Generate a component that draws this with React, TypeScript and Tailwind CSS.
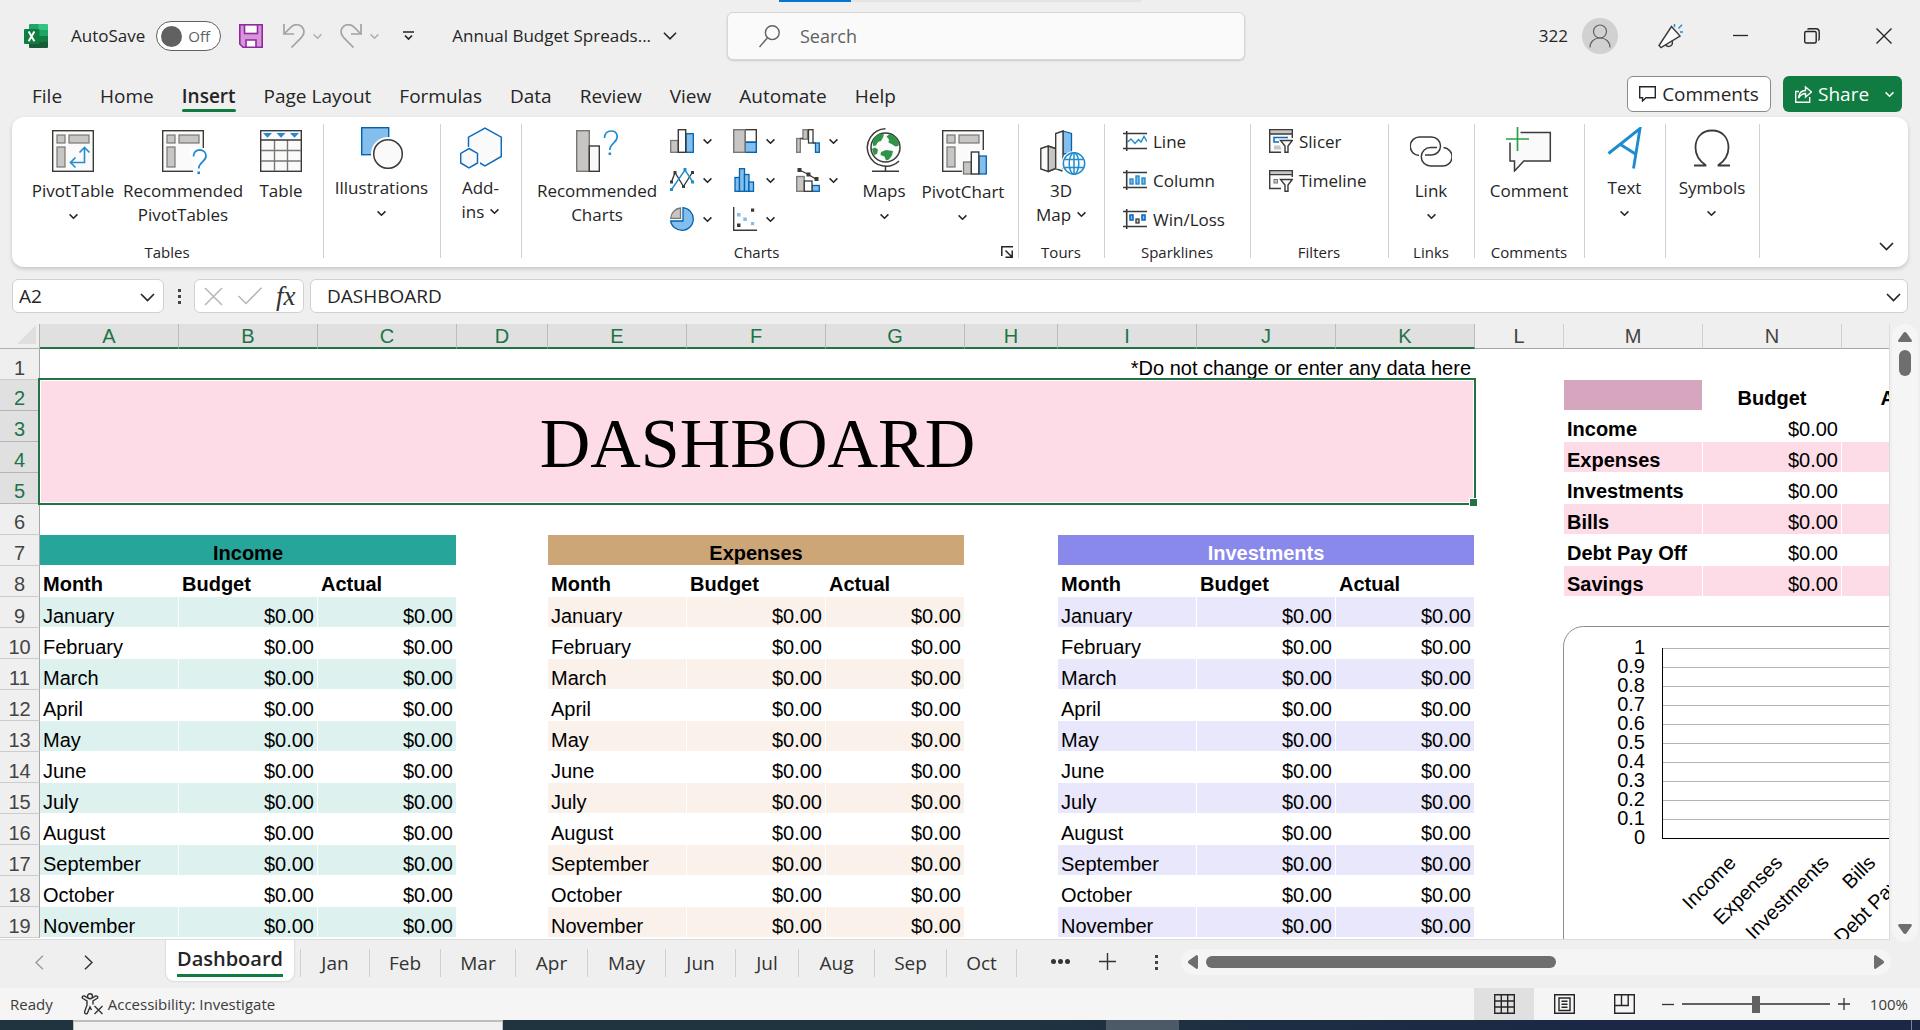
import type { ReactNode } from "react";

const ink = "#3b3a39";
const blue = "#1f8ccf";
const deep = "#0f6cbd";
const sky = "#83beec";
const grey = "#c8c6c4";
const mid = "#797774";
const paper = "#fafafa";

function Chevron({ size = 9, className = "" }: { size?: number; className?: string }) {
  return (
    <svg width={size} height={size} viewBox="0 0 9 9" fill="none" stroke="currentColor" strokeWidth={size > 10 ? 1 : 1.5} className={"inline-block shrink-0 " + className} aria-hidden="true">
      <path d="M0.6 2.4 4.5 6.3 8.4 2.4" />
    </svg>
  );
}

/* ---------- ribbon icons ---------- */

function PivotFrame() {
  return (
    <>
      <rect x="0.7" y="0.7" width="40.6" height="40.6" fill={paper} stroke={ink} strokeWidth="1.4" />
      <g fill={grey} stroke={mid} strokeWidth="1.2">
        <rect x="5" y="5" width="8" height="8" />
        <rect x="17" y="5" width="20" height="8" />
        <rect x="5" y="17" width="8" height="20" />
      </g>
    </>
  );
}

function PivotTableIcon() {
  return (
    <svg width="42" height="42" viewBox="0 0 42 42" fill="none">
      <PivotFrame />
      <path d="M32.5 18V32.5H19" stroke={blue} strokeWidth="1.6" />
      <path d="M27.5 22.5l5-5 5 5M23.5 27.500l-5 5 5 5" stroke={blue} strokeWidth="1.6" />
    </svg>
  );
}

function RecommendedPivotIcon() {
  return (
    <svg width="46" height="46" viewBox="0 0 46 46" fill="none" className="-mb-1 ml-1">
      <PivotFrame />
      <path d="M27 18h19v28H31v-6h2z" fill="#fff" />
      <path d="M31.500 26.500c0-4 2.600-6.500 6.200-6.500s6.300 2.400 6.300 6c0 5.500-7.300 6.300-7.300 12.500" stroke={blue} strokeWidth="1.8" />
      <rect x="35.400" y="41.500" width="2.600" height="2.600" fill={blue} />
    </svg>
  );
}

function TableIcon() {
  return (
    <svg width="42" height="42" viewBox="0 0 42 42" fill="none">
      <rect x="0.7" y="0.7" width="40.6" height="40.6" fill={paper} stroke={ink} strokeWidth="1.4" />
      <path d="M14.500 10v31M27.500 10v31M1 20.500h40M1 31h40" stroke={mid} strokeWidth="1.4" />
      <path d="M0 10h42" stroke={ink} strokeWidth="1.600" />
      <path d="M3 3h9L7.500 7.800zM16.500 3h9L21 7.800zM30 3h9l-4.500 4.800z" fill={blue} />
    </svg>
  );
}

function IllustrationsIcon() {
  return (
    <svg width="42" height="42" viewBox="0 0 42 42" fill="none">
      <rect x="0.7" y="0.7" width="27" height="27" fill={sky} stroke="#0063b1" strokeWidth="1.400" />
      <circle cx="27" cy="27" r="17" fill="#fff" />
      <circle cx="27" cy="27" r="14.300" fill={paper} stroke={ink} strokeWidth="1.500" />
    </svg>
  );
}

function AddInsIcon() {
  return (
    <svg width="42" height="42" viewBox="0 0 42 42" fill="none">
      <path d="M8.500 20V10.200L25 1l16.300 9.200v19.300L25 38.800l-6-3.300" fill={paper} stroke={deep} strokeWidth="1.500" />
      <path d="M9 18l11 6v13l-2 3z" fill="#fff" />
      <path d="M9 21.500l8.500 4.900v9.600L9 41l-8.300-5v-9.600z" fill={paper} stroke={deep} strokeWidth="1.500" />
    </svg>
  );
}

function RecommendedChartsIcon() {
  return (
    <svg width="42" height="42" viewBox="0 0 42 42" fill="none">
      <rect x="0.7" y="0.7" width="12.600" height="40.6" fill={grey} stroke={mid} strokeWidth="1.400" />
      <rect x="13.300" y="16" width="10" height="25.300" fill={paper} stroke={ink} strokeWidth="1.400" />
      <path d="M28.500 8c0-4.600 2.800-7 6.500-7s6.200 2.300 6.200 6c0 5.600-7.400 6.300-7.400 13" stroke={blue} strokeWidth="1.700" />
      <rect x="32.600" y="22.500" width="2.500" height="2.500" fill={blue} />
    </svg>
  );
}

function ColumnChartIcon() {
  return (
    <svg width="24" height="24" viewBox="0 0 24 24">
      <rect x="0.7" y="11.500" width="7.500" height="11.800" fill={grey} stroke={mid} strokeWidth="1.300" />
      <rect x="16" y="4.700" width="7.300" height="18.600" fill={sky} stroke="#0063b1" strokeWidth="1.300" />
      <rect x="8.300" y="0.7" width="7.400" height="22.600" fill="#fff" stroke={ink} strokeWidth="1.400" />
    </svg>
  );
}
function TreemapIcon() {
  return (
    <svg width="24" height="24" viewBox="0 0 24 24">
      <rect x="12" y="0.7" width="11.300" height="12.500" fill="#fff" stroke={ink} strokeWidth="1.400" />
      <rect x="12" y="13.300" width="11.300" height="10" fill={sky} stroke="#0063b1" strokeWidth="1.400" />
      <rect x="0.7" y="0.7" width="11.300" height="22.600" fill={grey} stroke={mid} strokeWidth="1.400" />
    </svg>
  );
}
function WaterfallIcon() {
  return (
    <svg width="24" height="24" viewBox="0 0 24 24" strokeWidth="1.300">
      <rect x="0.7" y="9.500" width="3.600" height="13.800" fill={grey} stroke={mid} />
      <rect x="7" y="0.7" width="4.500" height="9.500" fill={grey} stroke={mid} />
      <path d="M4.300 9.500H7M17 14h3" stroke={ink} />
      <rect x="12.500" y="0.7" width="4.500" height="13.300" fill="#fff" stroke={ink} />
      <rect x="19.500" y="14" width="3.800" height="9.300" fill={sky} stroke="#0063b1" />
    </svg>
  );
}
function LineChartIcon() {
  return (
    <svg width="24" height="24" viewBox="0 0 24 24" fill="none">
      <path d="M1.500 14 5 4.500 13.500 18.500 22.500 4" stroke={ink} strokeWidth="1.400" />
      <path d="M1.500 21.500 15 2 22.500 13.500" stroke={blue} strokeWidth="1.400" />
      <path d="M0 12.500h3v3H0zM3.500 3h3v3h-3zM12 17h3v3h-3zM21 3h3v3h-3z" fill={ink} />
      <path d="M0 20h3v3H0zM13.500 0h3v3h-3zM21 12.500h3v3h-3z" fill={blue} />
    </svg>
  );
}
function HistogramIcon() {
  return (
    <svg width="24" height="24" viewBox="0 0 24 24" fill={sky} stroke="#0063b1" strokeWidth="1.300">
      <rect x="2" y="9.500" width="4.500" height="13.800" />
      <rect x="6.500" y="0.7" width="5" height="22.600" />
      <rect x="11.500" y="6.500" width="4.500" height="16.800" />
      <rect x="16" y="14" width="4.500" height="9.300" />
    </svg>
  );
}
function ComboIcon() {
  return (
    <svg width="24" height="24" viewBox="0 0 24 24" fill="none" strokeWidth="1.300">
      <rect x="0.7" y="8.500" width="7.500" height="14.800" fill={grey} stroke={mid} />
      <rect x="16" y="17.500" width="7.300" height="5.800" fill={sky} stroke="#0063b1" />
      <rect x="8.300" y="13" width="7.700" height="10.300" fill="#fff" stroke={ink} />
      <path d="M3.500 2 12.500 6.500 20.500 11.500" stroke={ink} />
      <path d="M1.500 0h4v4h-4zM10.500 4.500h4v4h-4zM18.500 9h4v4h-4z" fill={ink} />
    </svg>
  );
}
function PieIcon() {
  return (
    <svg width="24" height="24" viewBox="0 0 24 24" strokeWidth="1.300">
      <path d="M13 .7V14H.7A11.300 10 0 0 0 12 23.300A11.300 11.300 0 0 0 23.300 12A11.300 11.300 0 0 0 13 .7z" fill={sky} stroke="#0063b1" />
      <path d="M10.500 1v10.300H.7A11 11 0 0 1 10.500 1z" fill={grey} stroke={mid} />
    </svg>
  );
}
function ScatterIcon() {
  return (
    <svg width="24" height="24" viewBox="0 0 24 24">
      <path d="M0.7 0v23.300H24" fill="none" stroke={ink} strokeWidth="1.400" />
      <path d="M4 6h3.500v3.500H4zM10.300 10.500h3.500V14h-3.500zM18 15h3.200v3.200H18z" fill={sky} />
      <path d="M4 16.500h3.500V20H4zM18 1.500h3.200v3.200H18z" fill={ink} />
    </svg>
  );
}

function MapsIcon() {
  return (
    <svg width="36" height="44" viewBox="0 0 36 44" fill="none">
      <circle cx="19.500" cy="19.500" r="14.500" fill={paper} stroke={ink} strokeWidth="1.500" />
      <path d="M20.500 8.500l3-2.500 6 3 3.500 6-.500 3-3 .5-4-2.500-3-1.500.5-3zM9 9l5-3.500 4 1-1 3-2 3.500-3 1-2 3.500-3 .5c-.5-4 .5-7 2-9zM15 24l5-2 7 1-1 4.500-3 4-3 1-1.500-4-4-1.500zM6 21l3-1.500 3 2-1 4.500-3 1z" fill="#2e9447" />
      <path d="M19.500 .8A18.700 18.700 0 1 0 33 33" stroke={ink} strokeWidth="1.500" />
      <path d="M19.500 38v5M6 43.200h27" stroke={ink} strokeWidth="1.500" />
    </svg>
  );
}

function PivotChartIcon() {
  return (
    <svg width="46" height="46" viewBox="0 0 46 46" fill="none" className="ml-1">
      <PivotFrame />
      <path d="M26 20h20v26H20V30h6z" fill="#fff" />
      <rect x="21.500" y="32" width="8" height="12" fill={grey} stroke={mid} strokeWidth="1.300" />
      <rect x="37" y="26" width="7.300" height="18" fill={sky} stroke="#0063b1" strokeWidth="1.300" />
      <rect x="29.300" y="22" width="7.500" height="22" fill="#fff" stroke={ink} strokeWidth="1.400" />
    </svg>
  );
}

function Map3DIcon() {
  return (
    <svg width="46" height="46" viewBox="0 0 46 46" fill="none" className="-mb-1 ml-1">
      <path d="M8.200 41.500V16l7.300 2.500v20z" fill={grey} stroke={mid} strokeWidth="1.200" />
      <path d="M.8 18.500 8.200 16V41.500L.8 39z" fill={paper} stroke={ink} strokeWidth="1.400" />
      <path d="M8.200 16l7.300 2.500M8.200 41.500l7.300-3 7 2.500" stroke={ink} strokeWidth="1.400" />
      <path d="M23 1l8.500 2.500V24H23z" fill={sky} stroke="#0063b1" strokeWidth="1.300" />
      <path d="M15.700 38.500V3.500L23 1v38" fill={paper} stroke={ink} strokeWidth="1.400" />
      <circle cx="34" cy="33.500" r="12.500" fill="#fff" />
      <g stroke={blue} strokeWidth="1.500">
        <circle cx="34" cy="33.500" r="10.700" fill={paper} />
        <ellipse cx="34" cy="33.500" rx="4.800" ry="10.700" />
        <path d="M24.500 29.500h19M24.500 37.500h19M34 23v21" />
      </g>
    </svg>
  );
}

function SparkFrame({ children }: { children: ReactNode }) {
  return (
    <svg width="24" height="22" viewBox="0 0 24 22" fill="none">
      {children}
      <path d="M0 3.500h24M0 18.500h24" stroke={ink} strokeWidth="1.600" />
      <path d="M3.700 1v20" stroke={ink} strokeWidth="1.600" />
    </svg>
  );
}
function SparkLineIcon() {
  return <SparkFrame><path d="M4.500 12l3.500-3 4 4.500 3.500-4 2.500 2.500 3-5.500 3 5" stroke={blue} strokeWidth="1.400" /></SparkFrame>;
}
function SparkColumnIcon() {
  return (
    <SparkFrame>
      <g fill={sky} stroke={blue} strokeWidth="1.400">
        <rect x="7" y="10" width="3" height="5" /><rect x="13" y="7" width="3" height="8" /><rect x="19" y="9" width="3" height="6" />
      </g>
    </SparkFrame>
  );
}
function SparkWinLossIcon() {
  return (
    <SparkFrame>
      <g fill={sky} stroke={deep} strokeWidth="1.600">
        <rect x="7" y="7" width="3" height="5" /><rect x="19" y="7" width="3" height="5" />
      </g>
      <rect x="13" y="11" width="3" height="4" fill={grey} stroke={ink} strokeWidth="1.300" />
    </SparkFrame>
  );
}
function Funnel() {
  return <path d="M11.500 11.500H23.300l-4.300 5.500v6.300h-3V17z" fill={paper} stroke={ink} strokeWidth="1.400" />;
}
function SlicerIcon() {
  return (
    <svg width="24" height="24" viewBox="0 0 24 24" fill="none">
      <rect x="0.700" y="0.7" width="22.600" height="22.600" fill={paper} />
      <path d="M12 23.300H.7V.7h22.600V9" stroke={ink} strokeWidth="1.400" />
      <path d="M.7 .7h22.600v4.300H.7z" fill={grey} stroke={ink} strokeWidth="1.300" />
      <path d="M10 13H5V8.500h14" stroke={deep} strokeWidth="1.500" />
      <path d="M5 16.500h6l1.500 4H5z" fill={grey} />
      <path d="M9.500 10H24v14H14v-6z" fill="#fff" />
      <Funnel />
    </svg>
  );
}
function TimelineIcon() {
  return (
    <svg width="24" height="24" viewBox="0 0 24 24" fill="none">
      <path d="M12 20.500H.7V2.700h22.600V9" fill={paper} stroke={ink} strokeWidth="1.400" />
      <path d="M.7 2.700h22.600v4H.7z" fill={grey} stroke={ink} strokeWidth="1.300" />
      <rect x="5" y="11.500" width="3.500" height="3.500" fill={grey} stroke={mid} />
      <path d="M9.500 10H24v14H14v-6z" fill="#fff" />
      <Funnel />
    </svg>
  );
}

function LinkIcon() {
  return (
    <svg width="42" height="42" viewBox="0 0 42 42" fill="none" stroke={ink} strokeWidth="1.500">
      <path d="M9 25.500A9.200 9.200 0 0 1 10 7h11.500a9 9 0 0 1 0 18H15" />
      <path d="M33.500 17.500A9 9 0 0 1 32 36H20.500a9.200 9.200 0 0 1 0-18.500H27" />
    </svg>
  );
}
function CommentIcon() {
  return (
    <svg width="46" height="45" viewBox="0 0 46 45" fill="none" className="-mt-[3px]">
      <path d="M4 16V34h5v10l9.500-10H45V5.500H15V16z" fill={paper} />
      <path d="M4 15.500V34h4.500v10l9.300-10h26.500V5.500H14.500" stroke={ink} strokeWidth="1.500" />
      <path d="M11.500 0v24M0 12h23" stroke="#2aa148" strokeWidth="1.700" />
    </svg>
  );
}
function TextIcon() {
  return (
    <svg width="36" height="42" viewBox="0 0 36 42" fill="none" stroke={blue} strokeWidth="2.900">
      <path d="M1.500 26.500 33 1.500 26.500 41.500M13.500 17.500 28.500 27" />
    </svg>
  );
}
function OmegaIcon() {
  return (
    <svg width="36" height="42" viewBox="0 0 36 42" fill="none" stroke={ink} strokeWidth="1.800">
      <path d="M0 38.500h11.500v-.500C5.500 34 1.500 29 1.500 20.500 1.500 10.500 8 3.500 18 3.500s16.500 7 16.500 17c0 8.500-4 13.500-10 17.500v.5H36" />
    </svg>
  );
}

/* ---------- ribbon building blocks ---------- */

function BigButton({ icon, lines, arrow = "none", className }: { icon: ReactNode; lines: string[]; arrow?: "none" | "below" | "inline"; className: string }) {
  return (
    <button type="button" className={"flex flex-col items-center gap-[7px] text-center " + className}>
      {icon}
      <span className="text-[17px] leading-6 whitespace-nowrap">
        {lines.map((l, i) => (
          <span key={l} className="block">
            {l}
            {arrow === "inline" && i === lines.length - 1 && <Chevron className="ml-1.5 mb-1" />}
          </span>
        ))}
        {arrow === "below" && <Chevron className="mx-auto mt-px block" />}
      </span>
    </button>
  );
}

function Group({ label, className, children, pad = "pt-[13px]" }: { label?: string; className: string; children: ReactNode; pad?: string }) {
  return (
    <section aria-label={label} className={"relative flex shrink-0 flex-col " + className}>
      <div className={"flex flex-1 items-start pr-0.5 " + pad}>{children}</div>
      {label && <div className={"pb-[5px] text-center text-[15px] leading-5 " + (label === "Charts" ? "pr-7" : "pr-0.5")}>{label}</div>}
      <div className="absolute top-[7px] right-0 h-[134px] w-px bg-[#d1d1d1]" />
    </section>
  );
}

function SmallButton({ icon, label }: { icon: ReactNode; label: string }) {
  return (
    <button type="button" className="flex h-6 items-center gap-1.5 text-[17px] leading-6">
      <span className="flex w-6 justify-center">{icon}</span>
      <span className="pt-0.5">{label}</span>
    </button>
  );
}

const chartButtons: [string, ReactNode][] = [
  ["Column or bar chart", <ColumnChartIcon />],
  ["Hierarchy chart", <TreemapIcon />],
  ["Waterfall chart", <WaterfallIcon />],
  ["Line or area chart", <LineChartIcon />],
  ["Statistic chart", <HistogramIcon />],
  ["Combo chart", <ComboIcon />],
  ["Pie or doughnut chart", <PieIcon />],
  ["Scatter chart", <ScatterIcon />],
];

function Ribbon() {
  return (
    <div className="mx-3 flex h-[150px] shrink-0 overflow-hidden rounded-xl bg-white shadow-[0_2px_4px_rgba(0,0,0,0.18)]">
      <Group label="Tables" className="w-[312px]">
        <BigButton icon={<PivotTableIcon />} lines={["PivotTable"]} arrow="below" className="ml-[15px] w-[92px]" />
        <BigButton icon={<RecommendedPivotIcon />} lines={["Recommended", "PivotTables"]} className="w-32" />
        <BigButton icon={<TableIcon />} lines={["Table"]} className="w-[68px]" />
      </Group>
      <Group className="w-[117px]" pad="pt-2.5">
        <BigButton icon={<IllustrationsIcon />} lines={["Illustrations"]} arrow="below" className="w-full" />
      </Group>
      <Group className="w-[81px]" pad="pt-2.5">
        <BigButton icon={<AddInsIcon />} lines={["Add-", "ins"]} arrow="inline" className="w-full" />
      </Group>
      <Group label="Charts" className="w-[497px]">
        <BigButton icon={<RecommendedChartsIcon />} lines={["Recommended", "Charts"]} className="ml-[11px] w-32" />
        <div className="-mt-px ml-[9px] grid grid-cols-3 gap-x-4 gap-y-[15px]">
          {chartButtons.map(([name, icon]) => (
            <button key={name} type="button" aria-label={name} className="flex w-[47px] items-center gap-[9px]">
              {icon}
              <Chevron />
            </button>
          ))}
        </div>
        <BigButton icon={<span className="-mt-0.5 block"><MapsIcon /></span>} lines={["Maps"]} arrow="below" className="ml-[11px] w-[60px]" />
        <BigButton icon={<span className="-mb-[3px] block"><PivotChartIcon /></span>} lines={["PivotChart"]} arrow="below" className="ml-[3px] w-[92px]" />
        <button type="button" aria-label="Chart settings" className="absolute right-1.5 bottom-[9px]">
          <svg width="12" height="12" viewBox="0 0 12 12" fill="none" stroke="#252525" strokeWidth="1.500">
            <path d="M.8 10V.8H12M4.500 4.500l6 6M11.200 4.500v6.700H4.500" />
          </svg>
        </button>
      </Group>
      <Group label="Tours" className="w-[86px]">
        <BigButton icon={<Map3DIcon />} lines={["3D", "Map"]} arrow="inline" className="w-full" />
      </Group>
      <Group label="Sparklines" className="w-[146px]" pad="pt-3">
        <div className="ml-[18px] flex flex-col gap-[15px]">
          <SmallButton icon={<SparkLineIcon />} label="Line" />
          <SmallButton icon={<SparkColumnIcon />} label="Column" />
          <SmallButton icon={<SparkWinLossIcon />} label="Win/Loss" />
        </div>
      </Group>
      <Group label="Filters" className="w-[138px]" pad="pt-3">
        <div className="ml-[18px] flex flex-col gap-[15px]">
          <SmallButton icon={<SlicerIcon />} label="Slicer" />
          <SmallButton icon={<TimelineIcon />} label="Timeline" />
        </div>
      </Group>
      <Group label="Links" className="w-[86px]">
        <BigButton icon={<LinkIcon />} lines={["Link"]} arrow="below" className="w-full" />
      </Group>
      <Group label="Comments" className="w-[110px]">
        <BigButton icon={<CommentIcon />} lines={["Comment"]} className="w-full" />
      </Group>
      <Group className="w-[81px]" pad="pt-2.5">
        <BigButton icon={<TextIcon />} lines={["Text"]} arrow="below" className="w-full" />
      </Group>
      <Group className="w-[94px]" pad="pt-2.5">
        <BigButton icon={<OmegaIcon />} lines={["Symbols"]} arrow="below" className="w-full" />
      </Group>
      <button type="button" aria-label="Collapse ribbon" className="mr-3.5 mb-2.5 ml-auto self-end">
        <Chevron size={15} />
      </button>
    </div>
  );
}

/* ---------- title bar ---------- */

function ExcelLogo() {
  return (
    <svg width="24" height="24" viewBox="0 0 24 24" aria-label="Excel" role="img">
      <path d="M6 0h9v6H5V1q0-1 1-1z" fill="#21a366" />
      <path d="M14.500 0H23q1 0 1 1v5h-9.500z" fill="#33c481" />
      <path d="M5 6h9.500v6H5z" fill="#107c41" />
      <path d="M14.500 6H24v6h-9.500z" fill="#21a366" />
      <path d="M5 12h9.500v6H5z" fill="#185c37" />
      <path d="M14.500 12H24v6h-9.500z" fill="#107c41" />
      <path d="M5 18h19v5q0 1-1 1H6q-1 0-1-1z" fill="#185c37" />
      <rect x="0" y="5" width="15.500" height="15" rx="1" fill="#107c41" />
      <path d="M4.600 7.500 10.400 17.200M10.400 7.500 4.600 17.200" stroke="#fff" strokeWidth="2" />
    </svg>
  );
}

function SaveIcon() {
  return (
    <svg width="24" height="24" viewBox="0 0 24 24" stroke="#8e2a9c" strokeWidth="1.600">
      <path d="M.8 .8h22.400v22.400H4L.8 20z" fill="#d795dd" />
      <rect x="5.500" y=".8" width="13" height="8.700" fill="#fafafa" />
      <path d="M7 23.200V16h10v7.200z" fill="#fafafa" />
    </svg>
  );
}

function UndoIcon({ flip = false }: { flip?: boolean }) {
  return (
    <svg width="22" height="24" viewBox="0 0 22 24" fill="none" stroke="#a3a3a3" strokeWidth="1.700" className={flip ? "-scale-x-100" : ""}>
      <path d="M1 0v10h10" />
      <path d="M1 10 8.500 2.700C12-.5 17 .3 19.500 3.500c2.300 3.200 1.500 7-1 9.800L8.500 23.500" />
    </svg>
  );
}

function TitleBar() {
  return (
    <header className="relative flex h-[72px] shrink-0 items-center pb-3 pl-6">
      <div className="absolute top-0 left-[779px] flex h-0.5 w-[362px] bg-[#e4e4e4]"><div className="w-[72px] bg-[#0078d4]" /></div>
      <div className="flex w-[703px] shrink-0 items-center pt-3">
        <ExcelLogo />
        <label className="ml-[23px] flex items-center gap-[11px] text-[17px] leading-6">
          AutoSave
          <input type="checkbox" role="switch" className="peer sr-only" />
          <span className="flex h-[30px] w-[65px] items-center gap-1.5 rounded-full border border-[#616161] bg-white pl-1 text-[15px] text-[#616161]">
            <span className="size-[21px] rounded-full bg-[#616161]" />
            Off
          </span>
        </label>
        <button type="button" aria-label="Save" className="ml-[18px]"><SaveIcon /></button>
        <button type="button" aria-label="Undo" className="ml-5"><UndoIcon /></button>
        <Chevron className="ml-2 text-[#b0b0b0]" />
        <button type="button" aria-label="Redo" className="ml-[18px]"><UndoIcon flip /></button>
        <Chevron className="ml-2 text-[#b0b0b0]" />
        <button type="button" aria-label="Customize Quick Access Toolbar" className="ml-6">
          <svg width="11" height="10" viewBox="0 0 11 10" fill="none" stroke="#252525" strokeWidth="1.700"><path d="M0 1h11M2 4.500 5.500 8 9 4.500" /></svg>
        </button>
        <button type="button" className="ml-[38px] flex items-center gap-3 text-[17px] leading-6 whitespace-nowrap">
          Annual Budget Spreads... <Chevron size={14} />
        </button>
      </div>
      <div className="mt-3 flex h-12 w-[518px] shrink-0 items-center gap-5 rounded-md border border-[#d6d6d6] bg-[#fafafa] pl-[31px] shadow-[0_1px_2px_rgba(0,0,0,0.15)]">
        <svg width="21" height="23" viewBox="0 0 21 23" fill="none" stroke="#616161" strokeWidth="1.400" className="shrink-0"><circle cx="13.300" cy="7.700" r="6.900" /><path d="M8.500 12.700.5 22" /></svg>
        <input type="text" aria-label="Search" placeholder="Search" className="w-full bg-transparent text-[18px] placeholder:text-[#616161] focus:outline-none" />
      </div>
      <div className="flex flex-1 items-center justify-end pt-3 pr-7">
        <span className="text-[17px]">322</span>
        <button type="button" aria-label="Account" className="ml-3.5 flex size-9 items-center justify-center rounded-full bg-[#d1d1d1]">
          <svg width="22" height="24" viewBox="0 0 22 24" fill="none" stroke="#616161" strokeWidth="1.200"><circle cx="11" cy="7.500" r="6.500" /><path d="M1 23.500c0-6 4.500-9.500 10-9.500s10 3.500 10 9.500" /></svg>
        </button>
        <button type="button" aria-label="Coming soon" className="ml-10">
          <svg width="25" height="25" viewBox="0 0 25 25" fill="none" stroke={ink} strokeWidth="1.400">
            <path d="M13.500 2.500 22 12 3 23.500 1 21.500z" fill={paper} />
            <path d="M7.500 20.500c1 3 6.500 2.500 7-1.500l-.5-2.500" />
            <path d="M16.500 0v3M20.500 4.500 24 .8M22 8h3" stroke={blue} />
          </svg>
        </button>
        <button type="button" aria-label="Minimize" className="ml-[50px]">
          <svg width="15" height="16" viewBox="0 0 15 16" stroke="#252525" strokeWidth="1.300"><path d="M0 7.500h15" /></svg>
        </button>
        <button type="button" aria-label="Restore" className="ml-14">
          <svg width="16" height="16" viewBox="0 0 16 16" fill="none" stroke="#252525" strokeWidth="1.400"><rect x=".7" y="3.500" width="11.500" height="11.500" rx="1.500" /><path d="M3.500 1.500Q4 .7 5.500.7H12q3.200 0 3.200 3.200v6q0 2-1 2.600" /></svg>
        </button>
        <button type="button" aria-label="Close" className="ml-14">
          <svg width="16" height="16" viewBox="0 0 16 16" stroke="#252525" strokeWidth="1.400"><path d="M.5.5l15 15M15.500.5l-15 15" /></svg>
        </button>
      </div>
    </header>
  );
}

const menu = ["File", "Home", "Insert", "Page Layout", "Formulas", "Data", "Review", "View", "Automate", "Help"];

function MenuRow() {
  return (
    <div className="flex h-[45px] shrink-0 items-start justify-between pr-[18px] pl-8">
      <nav className="flex items-center gap-7 pt-2.5 text-[19px] leading-7">
        {menu.map((m) => (
          <a key={m} href="#" className={m === "Insert" ? "relative font-semibold" : m === "File" ? "mr-2.5" : ""}>
            {m}
            {m === "Insert" && <span className="absolute inset-x-0 -bottom-0.5 h-[3px] rounded-full bg-[#0f7b41]" />}
          </a>
        ))}
      </nav>
      <div className="flex gap-3 pt-1">
        <button type="button" className="flex h-9 w-36 items-center justify-center gap-1.5 rounded-md border border-[#8a8a8a] bg-white text-[19px]">
          <svg width="17" height="16" viewBox="0 0 17 16" fill="none" stroke="#252525" strokeWidth="1.400"><path d="M.7.7h15.600v11H7L3.500 15v-3.300H.7z" /></svg>
          Comments
        </button>
        <button type="button" className="flex h-9 w-[119px] items-center gap-1.5 rounded-md bg-[#107c41] pl-3 text-[19px] text-white">
          <svg width="17" height="18" viewBox="0 0 17 18" fill="none" stroke="#fff" strokeWidth="1.400"><path d="M4 6.500H.7v10.800h14V12M3.500 13c.5-5 3.500-7.500 7-7.500V2l6 5-6 5V8.500c-3 0-5 1.500-7 4.500z" /></svg>
          Share
          <Chevron className="ml-2.5" />
        </button>
      </div>
    </div>
  );
}

function FormulaBar() {
  return (
    <div className="mx-3 mt-3 flex h-[34px] shrink-0 text-[19px]">
      <div className="flex w-[152px] items-center rounded-md border border-[#d1d1d1] bg-white pr-2 pl-1.5">
        <input aria-label="Name box" defaultValue="A2" className="w-full min-w-0 bg-transparent text-[19px] focus:outline-none" />
        <button type="button" aria-label="Open name list"><Chevron size={15} /></button>
      </div>
      <div className="flex w-[30px] flex-col items-center justify-center gap-[3px]">
        <i className="size-[3px] bg-[#444]" /><i className="size-[3px] bg-[#444]" /><i className="size-[3px] bg-[#444]" />
      </div>
      <div className="flex w-[110px] items-center rounded-md border border-[#d1d1d1] bg-white pl-[9px]">
        <button type="button" aria-label="Cancel"><svg width="19" height="19" viewBox="0 0 19 19" stroke="#b5b5b5" strokeWidth="1.500"><path d="M1 1l17 17M18 1 1 18" /></svg></button>
        <button type="button" aria-label="Enter" className="ml-[15px]"><svg width="24" height="18" viewBox="0 0 24 18" fill="none" stroke="#b5b5b5" strokeWidth="1.500"><path d="M.5 9l7.500 7.500L23.500.7" /></svg></button>
        <button type="button" aria-label="Insert function" className="ml-3.5 font-['Liberation_Serif',serif] text-[27px] leading-6 text-[#333] italic">fx</button>
      </div>
      <div className="ml-1.5 flex min-w-0 flex-1 items-center rounded-md border border-[#d1d1d1] bg-white pr-1.5 pl-4">
        <input aria-label="Formula" defaultValue="DASHBOARD" className="w-full bg-transparent focus:outline-none" />
        <button type="button" aria-label="Expand formula bar"><Chevron size={15} /></button>
      </div>
    </div>
  );
}

/* ---------- worksheet ---------- */

const columns: [string, string][] = [
  ["A", "w-[139px]"], ["B", "w-[139px]"], ["C", "w-[139px]"], ["D", "w-[91px]"],
  ["E", "w-[139px]"], ["F", "w-[139px]"], ["G", "w-[139px]"], ["H", "w-[93px]"],
  ["I", "w-[139px]"], ["J", "w-[139px]"], ["K", "w-[139px]"], ["L", "w-[89px]"],
  ["M", "w-[139px]"], ["N", "w-[139px]"], ["O", "w-[139px]"],
];
const months = ["January", "February", "March", "April", "May", "June", "July", "August", "September", "October", "November"];
const blocks = [
  { name: "Income", head: "bg-[#26a69a] text-black", stripe: "bg-[#ddf1ef]" },
  { name: "Expenses", head: "bg-[#cca677] text-black", stripe: "bg-[#f9f1ea]" },
  { name: "Investments", head: "bg-[#8989eb] text-white", stripe: "bg-[#e8e7fb]" },
];
const summary = ["Income", "Expenses", "Investments", "Bills", "Debt Pay Off", "Savings"];
const base = "h-[31px] border-r border-b border-white px-[3px] align-bottom whitespace-nowrap ";
const cell = base + "leading-6 ";
const lowCell = base + "leading-[22px] ";

function SummaryCells({ row }: { row: number }) {
  if (row === 2)
    return (
      <>
        <td className={cell + "bg-[#d5a6bd]"} />
        <td className={cell + "text-center font-bold"}>Budget</td>
        <td className={cell + "text-center font-bold"}>Actual</td>
      </>
    );
  if (row < 3 || row > 8) return <td colSpan={3} className={cell} />;
  const fill = row % 2 === 0 ? "bg-[#fddce7] " : "";
  return (
    <>
      <td className={cell + fill + "font-bold"}>{summary[row - 3]}</td>
      <td className={cell + fill + "text-right"}>$0.00</td>
      <td className={cell + fill} />
    </>
  );
}

function BodyCells({ row }: { row: number }) {
  if (row === 1) return <td colSpan={11} className={lowCell + "text-right"}>*Do not change or enter any data here</td>;
  if (row === 2)
    return (
      <td colSpan={11} rowSpan={4} className="relative bg-[#fddce7] pt-[3px] text-center align-middle font-['Liberation_Serif',serif] text-[70px] leading-none">
        DASHBOARD
        <span className="absolute -top-0.5 -right-px -bottom-px -left-0.5 border-2 border-[#217346] inset-ring inset-ring-white" />
        <span className="absolute -right-0.5 -bottom-0.5 size-2 border-t border-l border-white bg-[#217346]" />
      </td>
    );
  if (row < 6) return null;
  if (row === 6) return <td colSpan={11} className={cell} />;
  return (
    <>
      {blocks.map((b, i) => {
        const gap = i < 2 ? <td key="gap" className={cell} /> : null;
        if (row === 7) return [<td key={b.name} colSpan={3} className={cell + "text-center font-bold " + b.head}>{b.name}</td>, gap];
        if (row === 8)
          return [
            <td key={b.name} className={cell + "font-bold"}>Month</td>,
            <td key="b" className={cell + "font-bold"}>Budget</td>,
            <td key="a" className={cell + "font-bold"}>Actual</td>,
            gap,
          ];
        const fill = row % 2 === 1 ? b.stripe : "";
        return [
          <td key={b.name} className={lowCell + fill}>{months[row - 9]}</td>,
          <td key="b" className={lowCell + "text-right " + fill}>$0.00</td>,
          <td key="a" className={lowCell + "text-right " + fill}>$0.00</td>,
          gap,
        ];
      })}
    </>
  );
}

function Chart() {
  const ticks = ["1", "0.9", "0.8", "0.7", "0.6", "0.5", "0.4", "0.3", "0.2", "0.1", "0"];
  return (
    <svg width="620" height="420" viewBox="0 0 620 420" className="absolute top-[302px] left-[1563px]" fontSize="20">
      <rect x=".5" y=".5" width="619" height="419" rx="20" fill="#fff" stroke="#8c8c8c" />
      {ticks.map((t, i) => (
        <g key={t}>
          <text x="82" y={28 + i * 19} textAnchor="end">{t}</text>
          <path d={`M99 ${22.5 + i * 19}h500`} stroke={t === "0" ? "#000" : "#b3b3b3"} />
        </g>
      ))}
      <path d="M99.500 22v191" stroke="#000" />
      {summary.slice(0, 5).map((s, i) => (
        <text key={s} transform={`translate(${174 + i * 46.500} 238) rotate(-45)`} textAnchor="end">{s}</text>
      ))}
    </svg>
  );
}

function Sheet() {
  const rows = Array.from({ length: 19 }, (_, i) => i + 1);
  return (
    <div className="flex min-h-0 flex-1">
      <div className="relative min-w-0 flex-1 overflow-hidden border-r border-b border-[#dcdcdc] bg-white font-['Liberation_Sans',Arial,sans-serif] text-[20px] text-black">
        <table className="w-[1981px] table-fixed border-separate border-spacing-0">
          <colgroup>
            <col className="w-10" />
            {columns.map(([c, w]) => <col key={c} className={w} />)}
          </colgroup>
          <thead>
            <tr>
              <th className="h-[25px] border-r border-b border-[#b0b0b0] bg-[#efefef] p-0 align-bottom">
                <svg width="19" height="19" viewBox="0 0 19 19" className="mb-1 ml-auto mr-[3px] block"><path d="M19 0v19H0z" fill="#dfdfdf" /></svg>
              </th>
              {columns.map(([c]) => (
                <th key={c} className={"h-[25px] border-r p-0 align-bottom font-normal leading-[22px] " + (c < "L" ? "border-b-2 border-r-[#bcbcbc] border-b-[#217346] bg-[#e0e0e0] text-[#217346]" : "border-b border-r-[#d0d0d0] border-b-[#a6a6a6] bg-[#efefef] pb-px text-[#444]")}>{c === "O" ? "" : c}</th>
              ))}
            </tr>
          </thead>
          <tbody>
            {rows.map((r) => (
              <tr key={r}>
                <th className={"h-[31px] border-r border-b border-r-[#a6a6a6] p-0 align-bottom font-normal " + (r === 1 || r > 8 ? "leading-[22px] " : "leading-6 ") + (r > 1 && r < 6 ? "border-b-[#b5b5b5] bg-[#e0e0e0] text-[#217346]" : "border-b-[#cccccc] bg-[#efefef] text-[#444]")}>{r}</th>
                <BodyCells row={r} />
                <td className={cell} />
                <SummaryCells row={r} />
              </tr>
            ))}
          </tbody>
        </table>
        <Chart />
      </div>
      <div className="mr-0.5 ml-0.5 -mb-0.5 flex w-[26px] shrink-0 flex-col items-center rounded-full bg-[#f5f5f5] py-2 text-[#6e6e6e]">
        <svg width="14" height="10" viewBox="0 0 14 10" fill="currentColor"><path d="M7 0q1 0 1.500.8L14 8.500q0 1.500-1.500 1.500h-11Q0 10 0 8.500L5.500.8Q6 0 7 0z" /></svg>
        <div className="mt-2 h-[26px] w-3 rounded-full bg-current" />
        <svg width="14" height="10" viewBox="0 0 14 10" fill="currentColor" className="mt-auto"><path d="M7 10q1 0 1.500-.8L14 1.500Q14 0 12.500 0h-11Q0 0 0 1.500l5.500 7.700q.5.800 1.500.800z" /></svg>
      </div>
    </div>
  );
}

/* ---------- bottom bars ---------- */

const sheets: [string, string][] = [
  ["Jan", "w-[69px]"], ["Feb", "w-[71px]"], ["Mar", "w-[75px]"], ["Apr", "w-[72px]"], ["May", "w-[78px]"],
  ["Jun", "w-[70px]"], ["Jul", "w-[63px]"], ["Aug", "w-[76px]"], ["Sep", "w-[72px]"], ["Oct", "w-[70px]"],
];

function SheetTabs() {
  return (
    <div className="flex h-12 shrink-0 items-start text-[19px] leading-7">
      <button type="button" aria-label="Previous sheet" className="mt-[15px] ml-[35px]">
        <svg width="9" height="15" viewBox="0 0 9 15" fill="none" stroke="#9a9a9a" strokeWidth="1.400"><path d="M8 .7 1 7.500 8 14.300" /></svg>
      </button>
      <button type="button" aria-label="Next sheet" className="mt-[15px] ml-10">
        <svg width="9" height="15" viewBox="0 0 9 15" fill="none" stroke="#333" strokeWidth="1.500"><path d="M1 .7l7 6.800-7 6.800" /></svg>
      </button>
      <button type="button" className="-mt-px ml-[73px] flex h-[42px] w-[128px] justify-center rounded-b-lg bg-white pt-[7px] font-semibold shadow-[0_0_2px_rgba(0,0,0,0.25)]">
        <span className="h-[31px] border-b-3 border-[#107c41] text-[20px] leading-[26px]">Dashboard</span>
      </button>
      <div className="mt-[9px] ml-1.5 flex h-7 border-l border-[#cfcfcf]">
        {sheets.map(([s, w]) => (
          <button key={s} type="button" className={"border-r border-[#cfcfcf] leading-7 text-[#333] " + w}>{s}</button>
        ))}
      </div>
      <button type="button" aria-label="More sheets" className="mt-[19px] ml-[34px] flex gap-0.5">
        <i className="size-[5px] rounded-full bg-[#333]" /><i className="size-[5px] rounded-full bg-[#333]" /><i className="size-[5px] rounded-full bg-[#333]" />
      </button>
      <button type="button" aria-label="New sheet" className="mt-[13px] ml-[29px]">
        <svg width="17" height="17" viewBox="0 0 17 17" stroke="#333" strokeWidth="1.400"><path d="M8.500 0v17M0 8.500h17" /></svg>
      </button>
      <div className="mt-[15px] ml-[39px] flex flex-col gap-[3px]">
        <i className="size-[3px] bg-[#444]" /><i className="size-[3px] bg-[#444]" /><i className="size-[3px] bg-[#444]" />
      </div>
      <div className="mt-[9px] mr-[29px] ml-[23px] flex h-[26px] min-w-0 flex-1 items-center rounded-full bg-[#f5f5f5] px-[7px] text-[#6e6e6e]">
        <svg width="10" height="14" viewBox="0 0 10 14" fill="currentColor"><path d="M0 7q0-1 .8-1.500L8.500 0Q10 0 10 1.500v11q0 1.500-1.500 1.500L.8 8.500Q0 8 0 7z" /></svg>
        <div className="mx-2 flex flex-1"><div className="h-3 w-[53%] rounded-full bg-current" /></div>
        <svg width="10" height="14" viewBox="0 0 10 14" fill="currentColor"><path d="M10 7q0-1-.8-1.500L1.500 0Q0 0 0 1.500v11Q0 14 1.500 14l7.700-5.500Q10 8 10 7z" /></svg>
      </div>
    </div>
  );
}

function StatusBar() {
  return (
    <footer className="flex h-8 shrink-0 items-center bg-[#f5f5f5] pr-3 pl-2.5 text-[15px] text-[#3b3b3b]">
      <span>Ready</span>
      <button type="button" className="ml-7 flex items-center gap-1">
        <svg width="23" height="22" viewBox="0 0 23 22" fill="none" stroke="#333" strokeWidth="1.400">
          <circle cx="9" cy="3.200" r="2.500" />
          <path d="M6.500 5 3.500 3C1.500 2.500.5 4.500 2 5.500L6 8v4L3.500 19c0 2 2 2.500 3 1l2.500-6 1.500 3M11.500 5l3-2c2-.5 3 1.500 1.500 2.500L12 8v3.500" />
          <path d="M13.500 13l8 8M21.500 13l-8 8" />
        </svg>
        Accessibility: Investigate
      </button>
      <div className="ml-auto flex h-full items-center">
        <button type="button" aria-label="Normal view" className="flex h-full w-[60px] items-center justify-center bg-[#e0e0e0]">
          <svg width="21" height="20" viewBox="0 0 21 20" fill="none" stroke="#252525" strokeWidth="1.400"><path d="M.7.700h19.600v18.600H.7zM7.300.7v18.600M13.700.7v18.600M.7 7h19.600M.7 13h19.600" /></svg>
        </button>
        <button type="button" aria-label="Page layout view" className="ml-5">
          <svg width="21" height="20" viewBox="0 0 21 20" fill="none" stroke="#252525" strokeWidth="1.400"><path d="M.7.700h19.600v18.600H.7zM5 4h11v12.500H5zM7.500 7.200h6M7.500 10.200h6M7.500 13.200h6" /></svg>
        </button>
        <button type="button" aria-label="Page break view" className="ml-[39px]">
          <svg width="21" height="20" viewBox="0 0 21 20" fill="none" stroke="#252525" strokeWidth="1.400"><path d="M.7.700h19.600v18.600H.7zM.7 11.500h13.500V.7M7.500.7v10.800" /></svg>
        </button>
        <button type="button" aria-label="Zoom out" className="ml-[27px]"><svg width="12" height="12" viewBox="0 0 12 12" stroke="#333" strokeWidth="1.300"><path d="M0 6.500h12" /></svg></button>
        <input
          type="range"
          aria-label="Zoom"
          defaultValue={50}
          className="mx-2 h-[17px] w-[148px] appearance-none bg-transparent [&::-webkit-slider-runnable-track]:h-0.5 [&::-webkit-slider-runnable-track]:bg-[#616161] [&::-webkit-slider-thumb]:-mt-[7px] [&::-webkit-slider-thumb]:h-[17px] [&::-webkit-slider-thumb]:w-2 [&::-webkit-slider-thumb]:appearance-none [&::-webkit-slider-thumb]:bg-[#616161]"
        />
        <button type="button" aria-label="Zoom in"><svg width="12" height="12" viewBox="0 0 12 12" stroke="#333" strokeWidth="1.300"><path d="M0 6h12M6 0v12" /></svg></button>
        <span className="ml-[18px] w-10 text-right">100%</span>
      </div>
    </footer>
  );
}

function TaskbarEdge() {
  return (
    <div className="flex h-2.5 shrink-0 bg-linear-to-r from-[#203440] from-50% to-[#1b2745] to-85%">
      <div className="ml-[73px] w-[430px] border-x border-t-2 border-[#bdbdbd] bg-[#f1f1f1]" />
      <div className="ml-[603px] w-[73px] bg-[#4b5a66]" />
      <div className="mr-2 ml-auto w-px bg-[#7b8496]" />
    </div>
  );
}

export default function App() {
  return (
    <div className="flex h-screen flex-col overflow-hidden bg-[#efefef] font-['Open_Sans','Noto_Sans',sans-serif] text-[#252525]">
      <TitleBar />
      <MenuRow />
      <Ribbon />
      <FormulaBar />
      <div className="h-[11px] shrink-0" />
      <Sheet />
      <SheetTabs />
      <StatusBar />
      <TaskbarEdge />
    </div>
  );
}
